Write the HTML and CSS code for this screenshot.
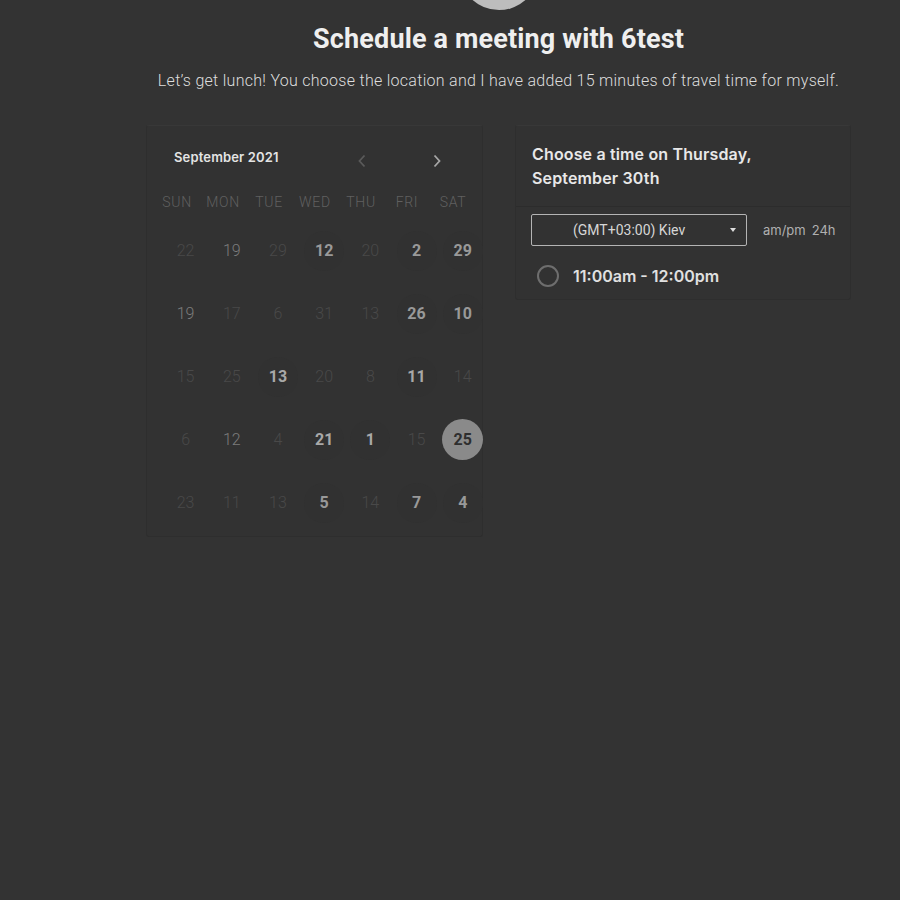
FILE: index.html
```html
<!DOCTYPE html>
<html lang="en">
<head>
<meta charset="utf-8">
<title>Schedule a meeting with 6test</title>
<link rel="stylesheet" href="styles.css">
</head>
<body>
<div class="page">
  <div class="avatar"></div>
  <h1 class="title">Schedule a meeting with 6test</h1>
  <p class="intro">Let’s get lunch! You choose the location and I have added 15 minutes of travel time for myself.</p>
  <div class="panels">
    <section class="cal">
      <div class="cal-head">
        <div class="month">September 2021</div>
        <button class="nav prev" aria-label="Previous month">
          <svg width="10" height="14" viewBox="0 0 10 14"><path d="M7.5 1.5 L2.5 7 L7.5 12.5" fill="none" stroke="currentColor" stroke-width="1.8"/></svg>
        </button>
        <button class="nav next" aria-label="Next month">
          <svg width="10" height="14" viewBox="0 0 10 14"><path d="M2.5 1.5 L7.5 7 L2.5 12.5" fill="none" stroke="currentColor" stroke-width="1.8"/></svg>
        </button>
      </div>
      <div class="weekdays">
        <span>SUN</span><span>MON</span><span>TUE</span><span>WED</span><span>THU</span><span>FRI</span><span>SAT</span>
      </div>
      <div class="days">
        <span class="d dim">22</span><span class="d mid">19</span><span class="d dim">29</span><span class="d av"><b>12</b></span><span class="d dim">20</span><span class="d av"><b>2</b></span><span class="d av"><b>29</b></span>
        <span class="d mid">19</span><span class="d dim">17</span><span class="d dim">6</span><span class="d dim">31</span><span class="d dim">13</span><span class="d av"><b>26</b></span><span class="d av"><b>10</b></span>
        <span class="d dim">15</span><span class="d dim">25</span><span class="d av hi"><b>13</b></span><span class="d dim">20</span><span class="d dim">8</span><span class="d av hi"><b>11</b></span><span class="d dim">14</span>
        <span class="d dim">6</span><span class="d mid">12</span><span class="d dim">4</span><span class="d av hi"><b>21</b></span><span class="d av hi"><b>1</b></span><span class="d dim">15</span><span class="d av sel"><b>25</b></span>
        <span class="d dim">23</span><span class="d dim">11</span><span class="d dim">13</span><span class="d av"><b>5</b></span><span class="d dim">14</span><span class="d av"><b>7</b></span><span class="d av"><b>4</b></span>
      </div>
    </section>
    <section class="times">
      <h2 class="times-head">Choose a time on Thursday,<br>September 30th</h2>
      <div class="times-body">
        <div class="controls">
          <div class="select">
            <span class="select-label">(GMT+03:00) Kiev</span>
            <span class="caret"></span>
          </div>
          <div class="fmt"><span>am/pm</span><span>24h</span></div>
        </div>
        <label class="slot">
          <span class="radio"></span>
          <span class="slot-text">11:00am - 12:00pm</span>
        </label>
      </div>
    </section>
  </div>
</div>
</body>
</html>
```
FILE: styles.css
```css
html, body {
  margin: 0;
  padding: 0;
  background: #333333;
  overflow: hidden;
}
body {
  font-family: Roboto, "Liberation Sans", sans-serif;
  color: #e6e6e6;
  height: 900px;
}
.page {
  width: 705px;
  margin-left: 146px;
  display: flex;
  flex-direction: column;
  align-items: center;
}
.avatar {
  width: 80px;
  height: 80px;
  border-radius: 50%;
  background: #bdbdbd;
  margin-top: -70px;
}
.title {
  margin: 13px 0 0;
  font-family: Roboto, sans-serif;
  font-weight: 700;
  font-size: 27px;
  line-height: 32px;
  color: #efefef;
  letter-spacing: 0.15px;
}
.intro {
  margin: 14px 0 0;
  font-family: Roboto, sans-serif;
  font-weight: 300;
  font-size: 16px;
  line-height: 24px;
  color: #dedede;
  letter-spacing: 0.28px;
  white-space: nowrap;
}
.panels {
  align-self: stretch;
  display: flex;
  gap: 32px;
  align-items: flex-start;
  margin-top: 32px;
}
.cal {
  width: 337px;
  height: 412px;
  box-sizing: border-box;
  border: 1px solid #2e2e2e;
  border-top-color: #383838;
  background: #323232;
  border-radius: 3px;
}
.cal-head {
  display: flex;
  align-items: center;
  padding: 21px 0 0 27px;
  height: 20px;
}
.month {
  width: 173px;
  font-family: Inter, sans-serif;
  font-weight: 600;
  font-size: 13px;
  line-height: 20px;
  color: #e4e4e4;
  letter-spacing: 0.15px;
}
.nav {
  width: 30px;
  height: 20px;
  padding: 0;
  border: 0;
  background: none;
  display: flex;
  align-items: center;
  justify-content: center;
  margin-top: 8px;
}
.prev { color: #5a5a5a; }
.next { color: #a6a6a6; margin-left: 45px; }
.weekdays {
  display: grid;
  grid-template-columns: repeat(7, 46px);
  margin: 25px 0 0 7px;
  font-family: Roboto, sans-serif;
  font-weight: 300;
  font-size: 14px;
  line-height: 20px;
  color: #606060;
  letter-spacing: 0.7px;
  text-align: center;
}
.days {
  display: grid;
  grid-template-columns: repeat(7, 46.2px);
  grid-auto-rows: 63px;
  margin: 7px 0 0 15.5px;
}
.d {
  display: flex;
  align-items: center;
  justify-content: center;
  font-family: Roboto, sans-serif;
  font-size: 16px;
  font-weight: 300;
}
.d.dim { color: #494949; }
.d.mid { color: #7c7c7c; }
.d.av b {
  width: 40px;
  height: 40px;
  border-radius: 50%;
  display: flex;
  align-items: center;
  justify-content: center;
  background: #313131;
  font-weight: 700;
  color: #999999;
}
.d.av.hi b { color: #a8a8a8; }
.d.av.sel b {
  width: 41px;
  height: 41px;
  background: #8a8a8a;
  color: #2e2e2e;
}
.times {
  width: 336px;
  box-sizing: border-box;
  border: 1px solid #2e2e2e;
  border-top-color: #383838;
  background: #323232;
  border-radius: 3px;
}
.times-head {
  margin: 0;
  padding: 16px 16px 16px 16px;
  font-family: Inter, sans-serif;
  font-weight: 600;
  font-size: 16px;
  line-height: 24px;
  color: #e8e8e8;
  letter-spacing: 0.15px;
  border-bottom: 1px solid #2c2c2c;
}
.times-body {
  padding: 7px 10px 12px 15px;
}
.controls {
  display: flex;
  align-items: center;
  gap: 16px;
}
.select {
  flex: 0 0 auto;
  width: 216px;
  height: 32px;
  box-sizing: border-box;
  border: 1px solid #b4b4b4;
  border-radius: 2px;
  display: flex;
  align-items: center;
  padding: 0 10px 0 41px;
}
.select-label {
  flex: 1;
  font-family: Roboto, sans-serif;
  font-size: 14px;
  color: #d6d6d6;
}
.caret {
  width: 0;
  height: 0;
  border-left: 3.5px solid transparent;
  border-right: 3.5px solid transparent;
  border-top: 4px solid #dddddd;
}
.fmt {
  display: flex;
  gap: 6px;
  font-family: Inter, sans-serif;
  font-size: 13px;
  color: #b0b0b0;
  white-space: nowrap;
}
.slot {
  display: flex;
  align-items: center;
  gap: 14px;
  margin-top: 19px;
  padding-left: 6px;
}
.radio {
  width: 22px;
  height: 22px;
  box-sizing: border-box;
  border: 2px solid #6e6e6e;
  border-radius: 50%;
}
.slot-text {
  font-family: Inter, sans-serif;
  font-weight: 600;
  font-size: 16px;
  color: #e0e0e0;
}
```
